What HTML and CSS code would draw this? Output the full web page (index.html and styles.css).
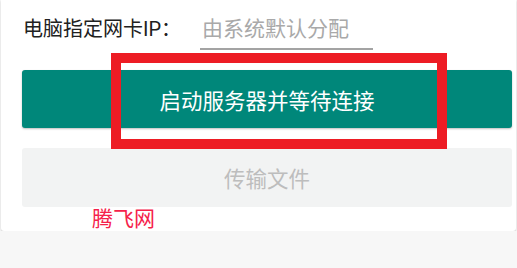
FILE: index.html
```html
<!DOCTYPE html>
<html lang="zh-CN">
<head>
    <meta charset="UTF-8">
    <title>传输</title>
    <link rel="stylesheet" href="styles.css">
</head>
<body>
<div class="card">
    <div class="ip-row">
        <span class="label">电脑指定网卡IP：</span>
        <input class="ip-input" type="text" placeholder="由系统默认分配">
    </div>
    <button class="btn primary">启动服务器并等待连接</button>
    <button class="btn disabled" disabled>传输文件</button>
    <div class="brand">腾飞网</div>
</div>
<div class="mark"></div>
</body>
</html>
```

FILE: styles.css
```css
body {
    margin: 0;
    background: #f7f7f7;
    font-family: Roboto, "Noto Sans CJK SC", sans-serif;
}

.card {
    margin: 0 1px;
    height: 231px;
    box-sizing: border-box;
    padding: 0 4px 0 21px;
    background: #fff;
    border-radius: 0 0 3px 3px;
    box-shadow: 0 1px 2px rgba(0, 0, 0, 0.18);
}

.ip-row {
    display: flex;
    padding-top: 10px;
}

.label {
    width: 178px;
    padding-left: 1px;
    box-sizing: border-box;
    font-size: 20px;
    line-height: 38px;
    color: #212121;
}

.ip-input {
    width: 173px;
    height: 40px;
    box-sizing: border-box;
    margin: 0;
    padding: 0 0 0 2px;
    border: none;
    border-bottom: 2px solid #a3a3a3;
    outline: none;
    background: transparent;
    font-family: inherit;
    font-size: 21px;
    color: #212121;
}
.ip-input::placeholder {
    color: #a9a9a9;
}

.btn {
    display: block;
    width: 100%;
    height: 58px;
    margin: 0;
    border: none;
    border-radius: 3px;
    font-family: inherit;
    font-size: 21.5px;
}

.primary {
    margin-top: 20px;
    background: #00877a;
    color: #fff;
    box-shadow: 0 1px 2px rgba(0, 0, 0, 0.25);
}

.disabled {
    margin-top: 20px;
    height: 59px;
    background: #f2f3f3;
    color: #bdbdbd;
}

.brand {
    margin: 1px 0 0 70px;
    font-size: 21px;
    line-height: 22px;
    color: #f5224a;
}

/* annotation box drawn over the button */
.mark {
    position: absolute;
    left: 111px;
    top: 53px;
    width: 336px;
    height: 96px;
    box-sizing: border-box;
    border: 10px solid #ed1c24;
}
```
